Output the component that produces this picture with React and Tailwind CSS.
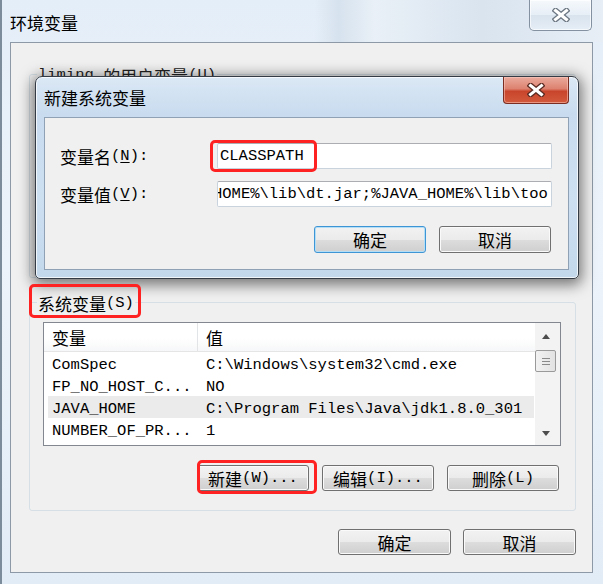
import React from 'react'

const CJK = "font-['Noto_Sans_CJK_SC',sans-serif]"
const MONO = "font-['Liberation_Mono','Noto_Sans_CJK_SC',monospace]"

// split a label into CJK runs and latin runs (SimSun-like half width latin)
function Txt({ s }) {
  const parts = s.split(/([\u3400-\u9fff]+)/).filter(Boolean)
  return parts.map((p, i) =>
    /[\u3400-\u9fff]/.test(p) ? (
      <span key={i} className={CJK + ' text-[17px] leading-none align-middle'}>{p}</span>
    ) : (
      <span key={i} className={MONO + ' text-[15.5px] leading-none align-middle whitespace-pre'}>{p}</span>
    )
  )
}

function CloseX({ edge }) {
  return (
    <svg width="18" height="14" viewBox="0 0 18 14">
      <path d="M3.5 2.5 L14.5 11.5 M14.5 2.5 L3.5 11.5" stroke={edge} strokeWidth="5.5" strokeLinecap="square" fill="none" />
      <path d="M3.5 2.5 L14.5 11.5 M14.5 2.5 L3.5 11.5" stroke="#ffffff" strokeWidth="3" strokeLinecap="square" fill="none" />
    </svg>
  )
}

function Btn({ label, w = 'w-[112px]', h = 'h-[26px]', focus }) {
  return (
    <button
      type="button"
      className={`${w} ${h} flex items-center justify-center rounded-[3px] border leading-none text-black bg-[linear-gradient(#f2f2f2,#ebebeb_50%,#dddddd_50%,#cfcfcf)] ${
        focus ? 'border-[#3d95d6] shadow-[inset_0_0_0_1px_#b4def6]' : 'border-[#707070] shadow-[inset_0_0_0_1px_#fafafa]'
      }`}
    >
      <span>
        <Txt s={label} />
      </span>
    </button>
  )
}

function Tri({ up }) {
  return (
    <svg width="8" height="5" viewBox="0 0 8 5">
      <path d={up ? 'M0 5 L4 0 L8 5 Z' : 'M0 0 L8 0 L4 5 Z'} fill="#4d4d4d" />
    </svg>
  )
}

const rows = [
  { name: 'ComSpec', value: 'C:\\Windows\\system32\\cmd.exe' },
  { name: 'FP_NO_HOST_C...', value: 'NO' },
  { name: 'JAVA_HOME', value: 'C:\\Program Files\\Java\\jdk1.8.0_301', hl: true },
  { name: 'NUMBER_OF_PR...', value: '1' },
]

export default function App() {
  return (
    <div className="relative w-[603px] h-[584px] overflow-hidden text-black bg-[linear-gradient(180deg,#e4eef8,#edf3fa_45%,#e2ecf6)] border-l-[2px] border-[#7d8c9b]">
      {/* Outer window title bar */}
      <div className="h-[42px] flex items-start justify-between bg-[linear-gradient(90deg,transparent_52%,#d6e2ee_56%,#e9f0f7_62%,#d9e4ef_80%,#e7eef6)]">
        <div className={`${CJK} text-[17px] leading-none pl-[8px] pt-[14px]`}>环境变量</div>
        <div className="mr-[11px] w-[63px] h-[31px] flex items-center justify-center rounded-b-[5px] border border-t-0 border-[#8391a0] bg-[linear-gradient(#f6f9fc,#e6eef6_50%,#d8e3ee_50%,#e6eef6)] shadow-[inset_0_0_0_1px_#ffffffaa]">
          <CloseX edge="#6b7682" />
        </div>
      </div>

      {/* Outer window client area */}
      <div className="ml-[8px] w-[583px] h-[531px] border border-[#8d99a6] bg-[#f0f0f0] flex flex-col pl-[18px] pr-[16px]">
        {/* user variables, mostly under the dialog */}
        <fieldset className="mt-[21px] border border-[#d5dfe5] rounded-[3px]">
          <legend className="ml-[7px] px-[1px] h-[20px] leading-[20px] text-[#222]">
            <Txt s="liming 的用户变量(U)" />
          </legend>
          <div className="h-[193px]" />
        </fieldset>

        {/* system variables */}
        <fieldset className="mt-[14px] border border-[#d5dfe5] rounded-[3px]">
          <legend className="ml-[7px] px-[1px] h-[20px] leading-[20px]">
            <Txt s="系统变量(S)" />
          </legend>

          <div className="pl-[13px] pr-[14px] pb-[19px]">
            <div className="mt-[10px] h-[124px] border border-[#828790] bg-white flex overflow-hidden">
              <div className="flex-1 flex flex-col">
                <div className="h-[29px] flex border-b border-[#e5e5e5] bg-[linear-gradient(#ffffff_55%,#f6f7f8)] leading-none">
                  <div className="w-[154px] pl-[8px] flex items-center border-r border-[#e3e4e6]">
                    <span>
                      <Txt s="变量" />
                    </span>
                  </div>
                  <div className="pl-[8px] flex items-center">
                    <span>
                      <Txt s="值" />
                    </span>
                  </div>
                </div>
                {rows.map((r) => (
                  <div
                    key={r.name}
                    className={`ml-[4px] mr-[1px] h-[22px] pt-[4px] grid grid-cols-[150px_1fr] items-center leading-none ${r.hl ? 'bg-[#ebebeb]' : ''}`}
                  >
                    <div className="pl-[4px] whitespace-nowrap overflow-hidden">
                      <Txt s={r.name} />
                    </div>
                    <div className="pl-[8px] whitespace-nowrap overflow-hidden">
                      <Txt s={r.value} />
                    </div>
                  </div>
                ))}
              </div>
              {/* scrollbar */}
              <div className="w-[25px] pr-[4px] flex flex-col bg-[#f3f3f3]">
                <div className="h-[26px] flex items-center justify-center">
                  <Tri up />
                </div>
                <div className="mt-[1px] h-[22px] rounded-[2px] border border-[#9a9a9a] bg-[linear-gradient(90deg,#f2f2f2,#e2e2e2)] flex flex-col items-center justify-center gap-[2px]">
                  <div className="w-[8px] h-px bg-[#8a8a8a]" />
                  <div className="w-[8px] h-px bg-[#8a8a8a]" />
                  <div className="w-[8px] h-px bg-[#8a8a8a]" />
                </div>
                <div className="flex-1" />
                <div className="h-[24px] flex items-center justify-center">
                  <Tri />
                </div>
              </div>
            </div>

            <div className="mt-[19px] mr-[2px] flex justify-end gap-[13px]">
              <Btn label="新建(W)..." />
              <Btn label="编辑(I)..." />
              <Btn label="删除(L)" />
            </div>
          </div>
        </fieldset>

        <div className="mt-[18px] flex justify-end gap-[12px]">
          <Btn label="确定" w="w-[113px]" />
          <Btn label="取消" w="w-[113px]" />
        </div>
      </div>

      {/* New system variable dialog */}
      <div className="absolute left-[33px] top-[76px] w-[544px] h-[203px] flex flex-col rounded-t-[7px] rounded-b-[5px] border border-[#343b44] bg-[linear-gradient(180deg,#dbe8f5,#c9dcef_18%,#cde0f2_60%,#c4d8ec)] shadow-[0_3px_14px_3px_rgba(0,0,0,0.5),inset_0_0_0_1px_rgba(255,255,255,0.75)]">
        <div className="h-[40px] flex items-start justify-between">
          <div className={`${CJK} text-[17px] leading-none pl-[8px] pt-[12px]`}>新建系统变量</div>
          <div className="mr-[9px] w-[66px] h-[27px] flex items-center justify-center rounded-b-[4px] border border-t-0 border-[#7a2d20] bg-[linear-gradient(#eaaa9c,#dd8270_45%,#c8452c_55%,#d35a3c)] shadow-[inset_0_0_0_1px_rgba(255,210,200,0.5)]">
            <CloseX edge="#5a2a22" />
          </div>
        </div>
        <div className="ml-[8px] mr-[9px] h-[153px] border border-[#8fa1b4] bg-[#f0f0f0] pt-[25px]">
          <div className="h-[26px] flex items-center">
            <div className="w-[172px] pl-[15px] leading-none">
              <Txt s="变量名(" />
              <span className={MONO + ' text-[15.5px] leading-none align-middle underline underline-offset-2'}>N</span>
              <Txt s="):" />
            </div>
            <div className="w-[335px] h-[26px] pl-[2px] flex items-center bg-white border border-[#c9d3de] border-t-[#abadb3] rounded-[2px] leading-none">
              <span>
                <Txt s="CLASSPATH" />
              </span>
            </div>
          </div>
          <div className="mt-[12px] h-[26px] flex items-center">
            <div className="w-[172px] pl-[15px] leading-none">
              <Txt s="变量值(" />
              <span className={MONO + ' text-[15.5px] leading-none align-middle underline underline-offset-2'}>V</span>
              <Txt s="):" />
            </div>
            <div className="w-[335px] h-[26px] pr-[3px] flex items-center bg-white border border-[#c9d3de] border-t-[#abadb3] rounded-[2px] leading-none">
              <div className="flex-1 overflow-hidden">
                <div className="ml-[-5px] whitespace-pre">
                  <Txt s="HOME%\lib\dt.jar;%JAVA_HOME%\lib\tools.jar" />
                </div>
              </div>
            </div>
          </div>
          <div className="mt-[19px] pr-[17px] flex justify-end gap-[13px]">
            <Btn label="确定" h="h-[27px]" focus />
            <Btn label="取消" h="h-[27px]" />
          </div>
        </div>
      </div>

      {/* red highlight marks */}
      <div className="absolute left-[208px] top-[140px] w-[107px] h-[32px] border-[3px] border-[#ff2222] rounded-[5px]" />
      <div className="absolute left-[27px] top-[284px] w-[112px] h-[34px] border-[3px] border-[#ff2222] rounded-[5px]" />
      <div className="absolute left-[195px] top-[460px] w-[120px] h-[34px] border-[3px] border-[#ff2222] rounded-[5px]" />
    </div>
  )
}
